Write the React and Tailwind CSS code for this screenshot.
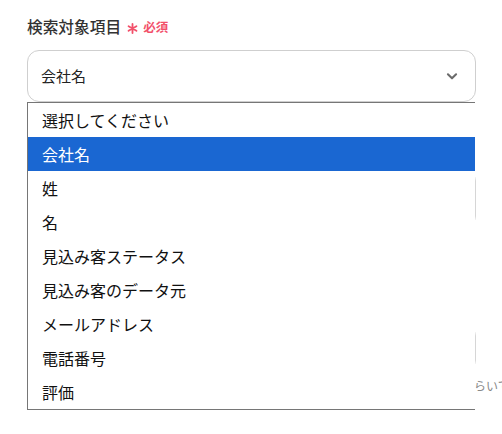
import React from "react";

const options = [
  "選択してください",
  "会社名",
  "姓",
  "名",
  "見込み客ステータス",
  "見込み客のデータ元",
  "メールアドレス",
  "電話番号",
  "評価",
];

const font = { fontFamily: '"Noto Sans CJK JP", "Noto Sans", sans-serif' };

export default function App() {
  const selected = "会社名";

  return (
    <div className="w-[502px] h-[434px] overflow-hidden bg-white text-[#333]" style={font}>
      <div className="relative pl-[27px] pt-[16px] w-[476px]">
        {/* Label */}
        <div className="flex items-center h-[22px]">
          <span className="text-[15.7px] font-medium text-[#333]">検索対象項目</span>
          <svg className="ml-[6px] mt-[3px] w-[11px] h-[11px]" viewBox="0 0 12 12" stroke="#f2506a" strokeWidth="2" strokeLinecap="round">
            <path d="M6 1v10M1.7 3.5l8.6 5M1.7 8.5l8.6-5" />
          </svg>
          <span className="ml-[5px] text-[12.5px] font-bold text-[#f2506a]">必須</span>
        </div>

        {/* Select box */}
        <div className="mt-[12px] h-[52px] rounded-[12px] border border-[#cfcfcf] flex items-center justify-between pl-[13px] pr-[16px]">
          <span className="text-[15px] text-[#222]">{selected}</span>
          <svg className="w-[14px] h-[14px]" viewBox="0 0 24 24" fill="none" stroke="#6b6b6b" strokeWidth="3.5" strokeLinecap="round" strokeLinejoin="round">
            <path d="M5 9l7 7 7-7" />
          </svg>
        </div>

        {/* Content underneath the open list */}
        <div className="mt-[69px] h-[55px] rounded-[10px] border border-[#d6d6d6]" />
        <div className="mt-[100px] h-[44px] rounded-[10px] border border-[#d6d6d6]" />
        <p className="mt-[7px] pl-[447px] text-[12px] text-[#888] whitespace-nowrap">らいて</p>

        {/* Open option list */}
        <ul className="absolute left-[27px] top-[102px] w-[448px] bg-white border-l border-t border-b border-[#767676]">
          {options.map((o) => (
            <li
              key={o}
              className={`h-[34px] flex items-center pl-[14px] text-[16px] ${
                o === selected ? "bg-[#1a67d2] text-white" : "text-[#111]"
              }`}
            >
              {o}
            </li>
          ))}
        </ul>
      </div>
    </div>
  );
}
